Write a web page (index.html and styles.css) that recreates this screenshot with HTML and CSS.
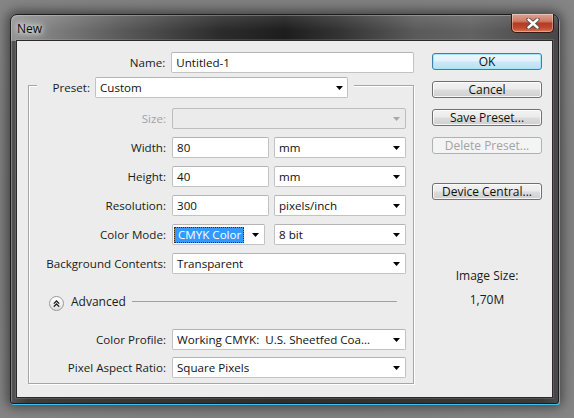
FILE: index.html
```html
<!DOCTYPE html>
<html>
<head>
<meta charset="utf-8">
<title>New</title>
<link rel="stylesheet" href="styles.css">
</head>
<body>
<div class="window">
  <div class="titlebar">
    <span class="title">New</span>
    <div class="close">
      <svg width="14" height="11" viewBox="0 0 14 11">
        <path d="M2.5 1.5L11.5 9.5M11.5 1.5L2.5 9.5" stroke="#4a4a4a" stroke-width="4.2" stroke-linecap="round" fill="none"/>
        <path d="M2.5 1.5L11.5 9.5M11.5 1.5L2.5 9.5" stroke="#ffffff" stroke-width="2.4" stroke-linecap="round" fill="none"/>
      </svg>
    </div>
  </div>
  <div class="client">
    <div class="form">
      <div class="row name-row">
        <span class="lbl">Name:</span>
        <div class="field w-name">Untitled-1</div>
      </div>
      <div class="group">
        <div class="group-head">
          <span class="head-lbl">Preset:</span>
          <div class="field select w-preset">Custom<svg class="arr" width="7" height="4" viewBox="0 0 7 4"><path d="M0 0H7L3.5 4Z"/></svg></div>
        </div>
        <div class="rows">
          <div class="row">
            <span class="lbl dis">Size:</span>
            <div class="field select disabled w-full"><svg class="arr" width="7" height="4" viewBox="0 0 7 4"><path d="M0 0H7L3.5 4Z"/></svg></div>
          </div>
          <div class="row">
            <span class="lbl">Width:</span>
            <div class="field w-num">80</div>
            <div class="field select w-unit">mm<svg class="arr" width="7" height="4" viewBox="0 0 7 4"><path d="M0 0H7L3.5 4Z"/></svg></div>
          </div>
          <div class="row">
            <span class="lbl">Height:</span>
            <div class="field w-num">40</div>
            <div class="field select w-unit">mm<svg class="arr" width="7" height="4" viewBox="0 0 7 4"><path d="M0 0H7L3.5 4Z"/></svg></div>
          </div>
          <div class="row">
            <span class="lbl">Resolution:</span>
            <div class="field w-num">300</div>
            <div class="field select w-unit">pixels/inch<svg class="arr" width="7" height="4" viewBox="0 0 7 4"><path d="M0 0H7L3.5 4Z"/></svg></div>
          </div>
          <div class="row">
            <span class="lbl">Color Mode:</span>
            <div class="field select w-mode focus"><span class="hl">CMYK Color</span><svg class="arr" width="7" height="4" viewBox="0 0 7 4"><path d="M0 0H7L3.5 4Z"/></svg></div>
            <div class="field select w-unit">8 bit<svg class="arr" width="7" height="4" viewBox="0 0 7 4"><path d="M0 0H7L3.5 4Z"/></svg></div>
          </div>
          <div class="row">
            <span class="lbl">Background Contents:</span>
            <div class="field select w-full">Transparent<svg class="arr" width="7" height="4" viewBox="0 0 7 4"><path d="M0 0H7L3.5 4Z"/></svg></div>
          </div>
        </div>
        <div class="adv">
          <span class="adv-btn">
            <svg width="7" height="7" viewBox="0 0 7 7"><path d="M0.8 3.6L3.5 1L6.2 3.6M0.8 6.6L3.5 4L6.2 6.6" stroke="#1a1a1a" stroke-width="1.3" fill="none"/></svg>
          </span>
          <span class="adv-text">Advanced</span>
          <span class="adv-line"></span>
        </div>
        <div class="rows adv-rows">
          <div class="row">
            <span class="lbl">Color Profile:</span>
            <div class="field select w-full">Working CMYK:&nbsp; U.S. Sheetfed Coa...<svg class="arr" width="7" height="4" viewBox="0 0 7 4"><path d="M0 0H7L3.5 4Z"/></svg></div>
          </div>
          <div class="row">
            <span class="lbl">Pixel Aspect Ratio:</span>
            <div class="field select w-full">Square Pixels<svg class="arr" width="7" height="4" viewBox="0 0 7 4"><path d="M0 0H7L3.5 4Z"/></svg></div>
          </div>
        </div>
      </div>
    </div>
    <div class="side">
      <div class="btn default">OK</div>
      <div class="btn">Cancel</div>
      <div class="btn">Save Preset...</div>
      <div class="btn off">Delete Preset...</div>
      <div class="btn gap">Device Central...</div>
      <div class="imgsize">Image Size:</div>
      <div class="imgval">1,70M</div>
    </div>
  </div>
</div>
</body>
</html>
```
FILE: styles.css
```css
html, body {
  margin: 0;
}
body {
  width: 574px;
  height: 418px;
  overflow: hidden;
  box-sizing: border-box;
  padding: 14px 0 0 10px;
  background: radial-gradient(ellipse at 50% 50%, #7a7a7a 0%, #808080 70%, #858585 100%);
  font-family: "Open Sans", "Noto Sans", sans-serif;
  font-size: 11.6px;
  color: #1b1b1b;
}
.window {
  width: 549px;
  height: 390px;
  box-sizing: border-box;
  border: 1px solid #1c1c1c;
  border-radius: 7px 7px 3px 3px;
  padding: 0 5px 5px;
  background:
    linear-gradient(rgba(255,255,255,0.12), rgba(255,255,255,0) 60%) no-repeat 0 0 / 100% 26px,
    linear-gradient(to right, #939393 0%, #808080 7%, #5a5a5a 20%, #2c2c2c 38%, #1d1d1d 50%, #333 60%, #5a5a5a 74%, #626262 84%, #474747 100%) no-repeat 0 0 / 100% 26px,
    linear-gradient(to right, #555 0, #3c3c3c 3%, #2e2e2e 50%, #3a3a3a 97%, #4a4a4a);
  box-shadow: inset 1px 1px 0 rgba(255,255,255,0.25), 1px 1px 0 #3fc2ea, 0 0 12px 3px rgba(0,0,0,0.5);
  display: flex;
  flex-direction: column;
}
.titlebar {
  height: 25px;
  display: flex;
  justify-content: space-between;
  align-items: flex-start;
}
.title {
  align-self: center;
  padding-left: 1px;
  margin-top: 1px;
  font-size: 12px;
  color: #0b0b0b;
  text-shadow: 0 0 5px #fff, 0 0 9px rgba(255,255,255,0.9), 0 0 14px rgba(255,255,255,0.6);
}
.close {
  width: 43px;
  height: 19px;
  box-sizing: border-box;
  margin-top: -1px;
  margin-right: -1px;
  border: 1px solid #3a1710;
  border-top: none;
  border-radius: 0 0 5px 5px;
  background: linear-gradient(#dba292 0%, #cf7b66 40%, #b43b24 52%, #c24a30 78%, #d9784f 100%);
  box-shadow: inset 0 0 0 1px rgba(255,255,255,0.35);
  display: flex;
  align-items: center;
  justify-content: center;
}
.client {
  flex: 1;
  background: #ececec;
  border: 1px solid #2a2a2a;
  box-shadow: 0 0 0 1px rgba(255,255,255,0.12);
  display: flex;
  padding: 11px 0 0 11px;
}
.form {
  width: 386px;
  display: flex;
  flex-direction: column;
}
.row {
  height: 21px;
  display: flex;
  align-items: center;
}
.lbl {
  width: 137px;
  text-align: right;
  white-space: nowrap;
  margin-right: 6px;
}
.lbl.dis {
  color: #a3a3a3;
}
.name-row {
  padding-left: 1px;
}
.field {
  height: 21px;
  box-sizing: border-box;
  border: 1px solid #c2c2c2;
  border-top-color: #b4b4b4;
  border-radius: 2px;
  background: #fff;
  display: flex;
  align-items: center;
  padding: 0 5px 0 4px;
  white-space: nowrap;
  color: #111;
}
.select .arr {
  margin-left: auto;
  flex: none;
  fill: #000;
}
.disabled {
  background: #ebebeb;
  border-color: #bdbdbd;
}
.disabled .arr {
  fill: #a8a8a8;
}
.w-name { width: 244px; }
.w-preset { width: 253px; padding-right: 4px; }
.w-full { width: 234px; }
.w-num { width: 97px; }
.w-unit { width: 132px; margin-left: 5px; }
.w-mode { width: 93px; padding-left: 1px; margin-right: 4px; }
.hl {
  height: 16px;
  box-sizing: border-box;
  background: #3399ff;
  color: #fff;
  border: 1px dotted #4a2a00;
  padding: 0 2px 0 3px;
  display: flex;
  align-items: center;
}
.group {
  margin-top: 12px;
  border: 1px solid #a6a6a6;
  box-shadow: inset 1px 1px 0 #fff, 1px 1px 0 #fff;
  padding: 0 0 5px 0;
  display: flex;
  flex-direction: column;
}
.group-head {
  align-self: flex-start;
  margin: -9px 0 0 8px;
  height: 21px;
  background: #ececec;
  display: flex;
  align-items: center;
  padding-right: 6px;
}
.head-lbl {
  width: 53px;
  text-align: right;
  margin-right: 5px;
}
.rows {
  display: flex;
  flex-direction: column;
  gap: 8px;
  margin-top: 10px;
}
.adv-rows {
  margin-top: 16px;
  gap: 7px;
}
.adv {
  height: 21px;
  margin-top: 18px;
  padding-left: 20px;
  display: flex;
  align-items: center;
}
.adv-btn {
  width: 15px;
  height: 15px;
  box-sizing: border-box;
  border: 1px solid #9a9a9a;
  border-radius: 50%;
  background: linear-gradient(#ffffff, #f1f1f1 50%, #dadada);
  display: flex;
  align-items: center;
  justify-content: center;
  margin-top: 1px;
}
.adv-text {
  margin-left: 7px;
  font-size: 12px;
  margin-top: -3px;
}
.adv-line {
  flex: 1;
  height: 1px;
  background: #a0a0a0;
  margin: -2px 16px 0 6px;
}
.side {
  width: 110px;
  margin-left: 18px;
  margin-top: 1px;
  display: flex;
  flex-direction: column;
}
.btn {
  height: 17px;
  box-sizing: border-box;
  border: 1px solid #707070;
  border-radius: 3px;
  background: linear-gradient(#f3f3f3 0%, #ebebeb 48%, #dddddd 52%, #cfcfcf 100%);
  box-shadow: inset 0 0 0 1px rgba(255,255,255,0.8);
  display: flex;
  align-items: center;
  justify-content: center;
  color: #111;
  font-size: 12px;
  line-height: 15px;
  margin-bottom: 11px;
  white-space: nowrap;
}
.btn.default {
  border-color: #3c7fb1;
  background: linear-gradient(#eef7fc 0%, #e2f1fa 48%, #cde8f7 52%, #bcdff2 100%);
  box-shadow: inset 0 0 0 1px #a6e3fa;
}
.btn.off {
  border-color: #adb2b5;
  background: #f4f4f4;
  box-shadow: none;
  color: #a3a3a3;
}
.btn.gap {
  margin-top: 18px;
}
.imgsize {
  margin-top: 57px;
  text-align: center;
  line-height: 15px;
  font-size: 12px;
}
.imgval {
  margin-top: 9px;
  text-align: center;
  line-height: 15px;
  font-size: 12px;
}
```
